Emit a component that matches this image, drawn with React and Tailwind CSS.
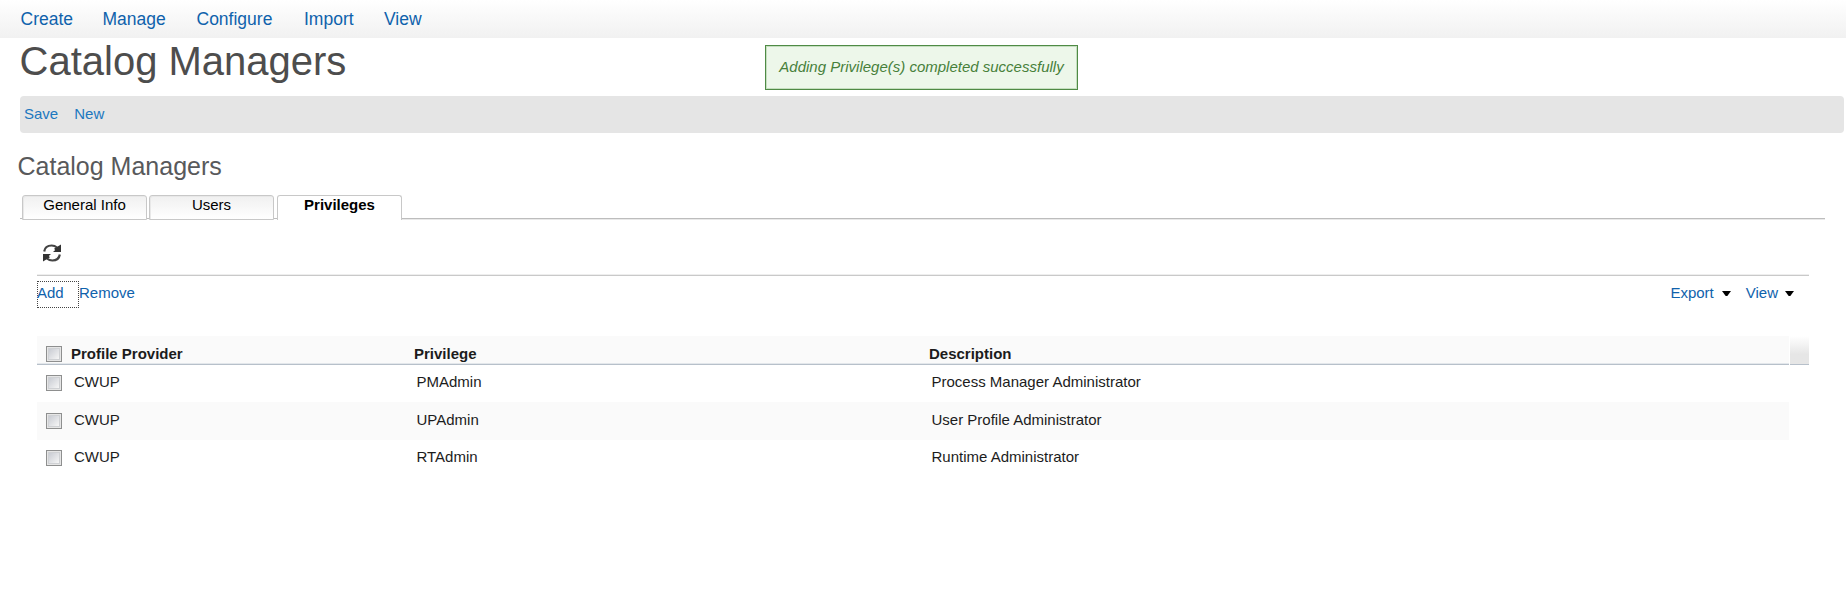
const rows = [
  { provider: "CWUP", privilege: "PMAdmin", description: "Process Manager Administrator" },
  { provider: "CWUP", privilege: "UPAdmin", description: "User Profile Administrator" },
  { provider: "CWUP", privilege: "RTAdmin", description: "Runtime Administrator" },
];

function Checkbox() {
  return (
    <span className="block size-4 shrink-0 border border-[#8e8f8f] bg-[#e6e6e6] p-px">
      <span className="block size-full border border-[#cfd1d4] bg-linear-to-br from-[#c9ccd3] to-[#f6f6f6]" />
    </span>
  );
}

function Caret() {
  return (
    <svg width="9" height="5" viewBox="0 0 9 5" className="shrink-0">
      <path d="M0 0h9L5.300 5H3.700z" fill="#000" />
    </svg>
  );
}

function RefreshIcon() {
  return (
    <svg width="18" height="18" viewBox="0 0 18 18">
      <g fill="none" stroke="#444" strokeWidth="2.200">
        <path d="M1.200 7.500C1.800 3.500 5 1.500 8.700 1.500c2.300 0 3.900.8 5.300 2" />
        <path d="M16.800 10.500c-.6 4-3.800 6-7.500 6-2.300 0-3.900-.8-5.300-2" />
      </g>
      <path d="M18 .5V8h-8l2.200-2-1.200-1.200z" fill="#333" />
      <path d="M0 17.500V10h8l-2.200 2 1.200 1.200z" fill="#333" />
    </svg>
  );
}

function Tab({ label }) {
  return (
    <div className="h-[25px] w-[125px] rounded-t-[3px] border border-[#c8c8c8] bg-linear-to-b from-[#f0f0f0] to-white text-center leading-[18px] shadow-[inset_1px_1px_0_#e8e8e8]">
      {label}
    </div>
  );
}

export default function App() {
  return (
    <div className="h-[589px] overflow-hidden bg-white font-['Liberation_Sans',Arial,sans-serif] text-[15px] text-[#1c1c1c]">
      <nav className="flex h-[38px] bg-linear-to-b from-white to-[#f1f1f1] pl-[20.5px] text-[17.5px] leading-[38px] text-[#0f62ac]">
        <a className="w-[82px]">Create</a>
        <a className="w-[94px]">Manage</a>
        <a className="w-[107.5px]">Configure</a>
        <a className="w-[80px]">Import</a>
        <a>View</a>
      </nav>

      <header className="flex h-[58px] items-start">
        <h1 className="w-[765px] pl-[19.5px] text-[40px] leading-[46px] text-[#4d4d4d]">Catalog Managers</h1>
        <div className="mt-[7px] h-[45px] w-[313px] border border-[#4f8a45] bg-[#edf7ea] text-center leading-[41px] text-[#47803a] italic shadow-[inset_0_0_0_1px_#c5dfbf]">
          Adding Privilege(s) completed successfully
        </div>
      </header>

      <div className="mr-[2px] ml-5 flex h-[37px] gap-4 rounded-[4px] bg-[#e5e5e5] pl-1 leading-[35px] text-[#1c78bf]">
        <a>Save</a>
        <a>New</a>
      </div>

      <h2 className="h-[62px] pt-[19px] pl-[17.5px] text-[25px] leading-[28px] text-[#58595b]">Catalog Managers</h2>

      <div className="mr-[21px] ml-5 flex h-[25px] items-start text-black">
        <div className="mt-[23px] h-[2px] w-[2px] border-t border-[#bdbdbd]" />
        <Tab label="General Info" />
        <div className="mt-[23px] h-[2px] w-[2px] border-t border-[#bdbdbd]" />
        <Tab label="Users" />
        <div className="mt-[23px] h-[2px] w-[3px] border-t border-[#bdbdbd]" />
        <div className="h-[25px] w-[125px] rounded-t-[3px] border border-b-0 border-[#c8c8c8] bg-white text-center leading-[18px] font-bold">
          Privileges
        </div>
        <div className="mt-[23px] h-[2px] grow border-t border-b border-t-[#bdbdbd] border-b-[#e9e9e9]" />
      </div>

      <main className="mr-[37px] ml-[37px]">
        <div className="h-[56px] border-b border-[#c9c9c9] pt-[24px] pl-[6px] shadow-[inset_0_-1px_0_#eeeeee]">
          <RefreshIcon />
        </div>

        <div className="flex h-[60px] items-start pt-[5px] leading-[24px] text-[#0f62ac]">
          <a className="h-[27px] w-[42px] border border-dotted border-[#444] indent-[-1px] leading-[22px]">Add</a>
          <a>Remove</a>
          <div className="ml-auto flex items-center pr-[15px]">
            <a className="mr-[8px]">Export</a>
            <Caret />
            <a className="mr-[7px] ml-[15px]">View</a>
            <Caret />
          </div>
        </div>

        <div className="flex h-[29px] gap-px">
          <div className="flex grow border-b border-[#b7c0ca] bg-[#fafafa] font-bold shadow-[inset_0_-1px_0_#e3e7eb]">
            <div className="w-[34px] pt-[10px] pl-[9px]"><Checkbox /></div>
            <div className="w-[343px] pt-[8px] leading-[20px]">Profile Provider</div>
            <div className="w-[515px] pt-[8px] leading-[20px]">Privilege</div>
            <div className="pt-[8px] leading-[20px]">Description</div>
          </div>
          <div className="w-[19px] border-b border-[#b7c0ca] bg-linear-to-b from-white via-[#e6e6e6] via-65% to-[#e6e6e6]" />
        </div>

        <div className="mr-[20px]">
          {rows.map((row, i) => (
            <div
              key={row.privilege}
              className={i === 1 ? "flex h-[38px] items-start bg-[#fafafa] pt-px" : "flex h-[37px] items-start"}
            >
              <div className="w-[37px] pt-[10px] pl-[9px]"><Checkbox /></div>
              <div className="w-[342.5px] leading-[34px]">{row.provider}</div>
              <div className="w-[515px] leading-[34px]">{row.privilege}</div>
              <div className="leading-[34px]">{row.description}</div>
            </div>
          ))}
        </div>
      </main>
    </div>
  );
}
